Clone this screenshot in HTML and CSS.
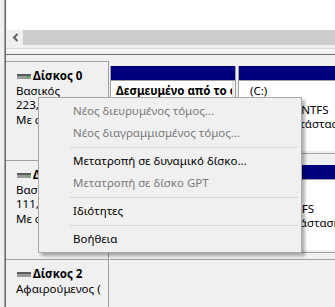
FILE: index.html
```html
<!DOCTYPE html>
<html lang="el">
<head>
    <meta charset="UTF-8">
    <title>Διαχείριση δίσκων</title>
    <link rel="stylesheet" href="styles.css">
</head>
<body>

    <div class="frame">
        <div class="inner">

            <!-- Volume list (scrolled) -->
            <div class="volumes"></div>
            <div class="hscroll">
                <div class="arrow">
                    <svg width="7" height="9" viewBox="0 0 7 9"><path d="M5.5 1 L2 4.5 L5.5 8" fill="none" stroke="#606060" stroke-width="2"/></svg>
                </div>
                <div class="thumb"></div>
            </div>
            <div class="splitter"></div>

            <!-- Graphical disk view -->
            <div class="disks">
                <div class="disk">
                    <div class="disk-label">
                        <div class="disk-name">
                            <svg class="hdd" width="14" height="5" viewBox="0 0 14 5"><rect x="0" y="0" width="14" height="5" fill="#9a9a9a"/><rect x="0" y="0" width="14" height="2" fill="#5a5a5a"/><rect x="10" y="2" width="2" height="2" fill="#2fbf2f"/></svg>
                            Δίσκος 0
                        </div>
                        <div>Βασικός</div>
                        <div>223,57 GB</div>
                        <div>Με σύνδεση</div>
                    </div>
                    <div class="parts">
                        <div class="part part-sys">
                            <div class="part-head"></div>
                            <div class="part-body">
                                <div class="vol-name bold">Δεσμευμένο από το σύστημα</div>
                                <div>549 MB NTFS</div>
                                <div>Υγιές (Σύστημα)</div>
                            </div>
                        </div>
                        <div class="part part-main">
                            <div class="part-head"></div>
                            <div class="part-body">
                                <div class="vol-name">(C:)</div>
                                <div>222,9 GB NTFS</div>
                                <div>Υγιής (Κατάσταση εκκίνησης)</div>
                            </div>
                        </div>
                    </div>
                </div>

                <div class="disk">
                    <div class="disk-label">
                        <div class="disk-name">
                            <svg class="hdd" width="14" height="5" viewBox="0 0 14 5"><rect x="0" y="0" width="14" height="5" fill="#9a9a9a"/><rect x="0" y="0" width="14" height="2" fill="#5a5a5a"/><rect x="10" y="2" width="2" height="2" fill="#2fbf2f"/></svg>
                            Δίσκος 1
                        </div>
                        <div>Βασικός</div>
                        <div>111,79 GB</div>
                        <div>Με σύνδεση</div>
                    </div>
                    <div class="parts">
                        <div class="part part-sys">
                            <div class="part-head"></div>
                            <div class="part-body">
                                <div class="vol-name">450 MB</div>
                                <div>Υγιές</div>
                            </div>
                        </div>
                        <div class="part part-data">
                            <div class="part-head"></div>
                            <div class="part-body">
                                <div class="vol-name">(D:)</div>
                                <div>111 GB NTFS</div>
                                <div>Υγιής (Κατάσταση αρχείου)</div>
                            </div>
                        </div>
                    </div>
                </div>

                <div class="disk disk-empty">
                    <div class="disk-label">
                        <div class="disk-name">
                            <svg class="hdd" width="14" height="5" viewBox="0 0 14 5"><rect x="0" y="0" width="14" height="5" fill="#9a9a9a"/><rect x="0" y="0" width="14" height="2" fill="#5a5a5a"/></svg>
                            Δίσκος 2
                        </div>
                        <div>Αφαιρούμενος (E:)</div>
                    </div>
                    <div class="parts"></div>
                </div>
            </div>

        </div>
    </div>

    <!-- Context menu for Disk 0 -->
    <div class="menu">
        <div class="item disabled">Νέος διευρυμένος τόμος...</div>
        <div class="item disabled">Νέος διαγραμμισμένος τόμος...</div>
        <div class="sep"></div>
        <div class="item">Μετατροπή σε δυναμικό δίσκο...</div>
        <div class="item disabled">Μετατροπή σε δίσκο GPT</div>
        <div class="sep"></div>
        <div class="item">Ιδιότητες</div>
        <div class="sep"></div>
        <div class="item">Βοήθεια</div>
    </div>

</body>
</html>
```

FILE: styles.css
```css
body {
    margin: 0;
    width: 335px;
    height: 307px;
    overflow: hidden;
    position: relative;
    background-color: #f0f0f0;
    font-family: "Noto Sans", "Liberation Sans", sans-serif;
    font-size: 11.5px;
    color: #000;
}
.bold {
    font-weight: bold;
}
.frame {
    margin-left: 4px;
    height: 307px;
    border-left: 1px solid #a0a0a0;
}
.inner {
    height: 100%;
    border-left: 1px solid #6d6d6d;
}
.volumes {
    height: 30px;
    margin-left: 1px;
    background-color: #fff;
}
.hscroll {
    display: flex;
    height: 15px;
    margin-left: 1px;
}
.hscroll .arrow {
    width: 16px;
    display: flex;
    align-items: center;
    justify-content: center;
    background-color: #f0f0f0;
}
.hscroll .thumb {
    flex: 1;
    background-color: #cdcdcd;
}
.splitter {
    height: 7px;
    margin-top: 3px;
    border-top: 1px solid #d8d8d8;
    border-bottom: 1px solid #6d6d6d;
    box-sizing: border-box;
    background: linear-gradient(#f8f8f8, #f0f0f0);
}
.disks {
    padding-top: 6px;
}
.disk {
    display: flex;
    height: 99px;
}
.disk-label {
    width: 103px;
    padding: 7px 7px 0 10px;
    box-sizing: border-box;
    border-top: 1px solid #a0a0a0;
    border-right: 1px solid #a0a0a0;
    line-height: 14.7px;
    white-space: nowrap;
    overflow: hidden;
}
.disk-label div {
    overflow: hidden;
}
.disk-name {
    font-weight: bold;
    display: flex;
    align-items: center;
}
.hdd {
    margin: 0 2px 0 1px;
}
.parts {
    flex: 1;
    display: flex;
    gap: 2px;
    margin-left: 1px;
    padding-top: 5px;
    overflow: hidden;
}
.disk-empty .parts {
    border-top: 1px solid #a0a0a0;
}
.part {
    height: 88px;
    flex-shrink: 0;
    display: flex;
    flex-direction: column;
    border: 1px solid #a0a0a0;
    border-top: none;
    box-sizing: border-box;
}
.part-sys {
    width: 126px;
}
.part-main,
.part-data {
    width: 130px;
}
.part-head {
    height: 14px;
    background-color: #00007f;
    border-bottom: 1px solid #a0a0a0;
}
.part-body {
    flex: 1;
    margin: 0 2px 2px 0;
    padding: 3px 0 0 5px;
    background-color: #fff;
    border-right: 1px solid #e0e0e0;
    line-height: 14px;
    white-space: nowrap;
    overflow: hidden;
}
.part-main .part-body {
    padding-left: 11px;
}
.part-data .part-body {
    padding-left: 6px;
}
.vol-name {
    margin-bottom: 5px;
}
.menu {
    position: absolute;
    left: 38px;
    top: 97px;
    width: 264px;
    padding: 2px;
    box-sizing: border-box;
    background-color: #f0f0f0;
    border: 1px solid #a8a8a8;
    box-shadow: 3px 3px 3px rgba(0, 0, 0, 0.3);
}
.item {
    height: 22px;
    line-height: 22px;
    padding-left: 32px;
    white-space: nowrap;
}
.item.disabled {
    color: #7a7a7a;
}
.sep {
    height: 6px;
    margin: 0 1px 0 29px;
    background: linear-gradient(#d7d7d7, #d7d7d7) center / 100% 1px no-repeat;
}
```
